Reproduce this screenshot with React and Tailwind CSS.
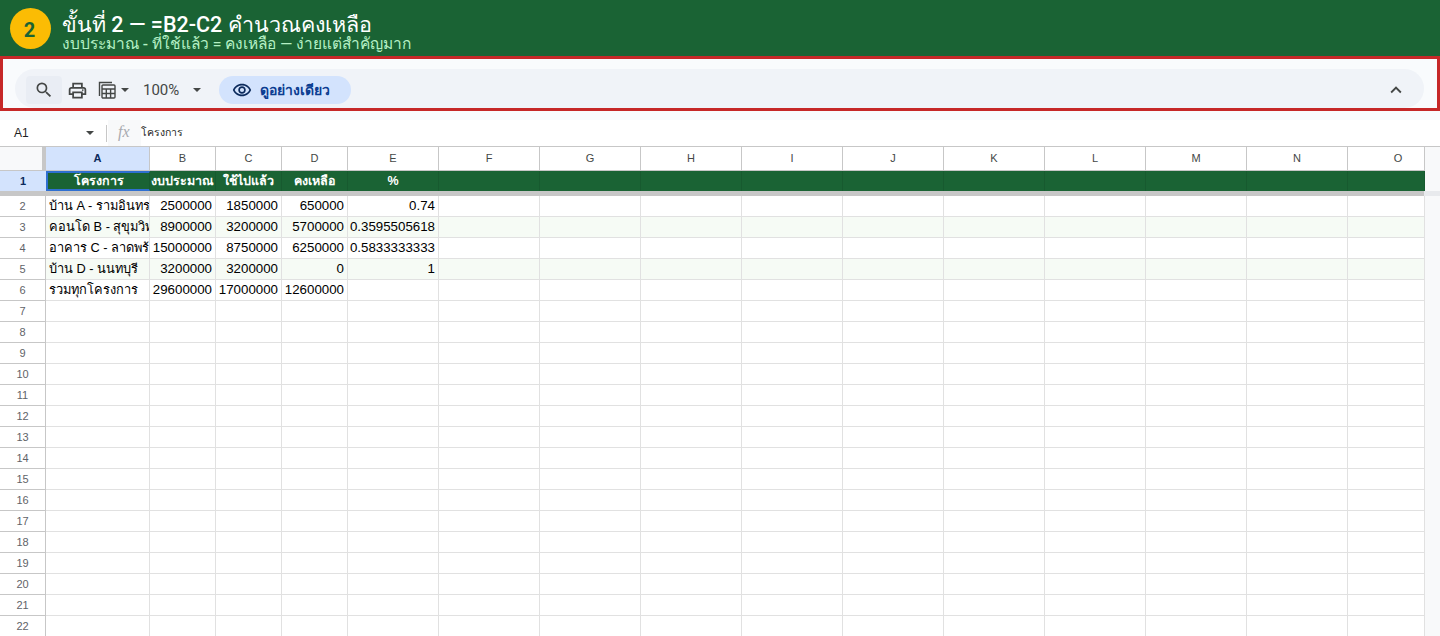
import { MdSearch, MdOutlineLocalPrintshop, MdOutlineRemoveRedEye, MdKeyboardArrowUp } from 'react-icons/md';

const cols = ['A', 'B', 'C', 'D', 'E', 'F', 'G', 'H', 'I', 'J', 'K', 'L', 'M', 'N', 'O'];

const data = [
    ['บ้าน A - รามอินทรา', '2500000', '1850000', '650000', '0.74'],
    ['คอนโด B - สุขุมวิท', '8900000', '3200000', '5700000', '0.3595505618'],
    ['อาคาร C - ลาดพร้าว', '15000000', '8750000', '6250000', '0.5833333333'],
    ['บ้าน D - นนทบุรี', '3200000', '3200000', '0', '1'],
    ['รวมทุกโครงการ', '29600000', '17000000', '12600000', ''],
];

const headers = ['โครงการ', 'งบประมาณ', 'ใช้ไปแล้ว', 'คงเหลือ', '%'];

const gridCols = 'grid grid-cols-[46px_104px_66px_66px_66px_91px_101px_101px_101px_101px_101px_101px_101px_101px_101px_77px_16px]';

function Caret() {
    return <span className="block w-0 h-0 border-x-[4px] border-x-transparent border-t-[4px] border-t-[#444746]" />;
}

function CalcIcon() {
    return (
        <svg width="18" height="18" viewBox="0 0 18 18" fill="none" stroke="#444746" strokeWidth="1.4">
            <path d="M1.5 15V1.5H14" />
            <rect x="4" y="4" width="13" height="13" rx="1" />
            <path d="M4 8h13M8.3 8v9M12.6 8v9M4 12.5h13" />
        </svg>
    );
}

function Toolbar() {
    return (
        <div className="h-[55px] border-[3px] border-[#c62828] bg-[#f9fbfd] flex items-end pl-[12px] pr-[13px]">
            <div className="flex-1 h-[39px] rounded-full bg-[#f0f3f8] flex items-center pt-[3px]">
                <div className="ml-[11px] w-[36px] h-[28px] rounded bg-[#e9edf4] flex items-center justify-center">
                    <MdSearch size={20} color="#444746" />
                </div>
                <MdOutlineLocalPrintshop size={21} color="#444746" className="ml-[5px]" />
                <div className="ml-[10px] flex items-center gap-[5px]">
                    <CalcIcon />
                    <Caret />
                </div>
                <span className="ml-[14px] text-[15px] text-[#444746] w-[42px] font-['Roboto',sans-serif]">100%</span>
                <span className="ml-[8px]"><Caret /></span>
                <div className="ml-[18px] h-[28px] w-[132px] rounded-full bg-[#d3e3fd] flex items-center pl-[13px] gap-[8px] text-[#0b3d91]">
                    <MdOutlineRemoveRedEye size={20} color="#0b2a5c" />
                    <span className="text-[14px] font-bold">ดูอย่างเดียว</span>
                </div>
                <MdKeyboardArrowUp size={22} color="#444746" className="ml-auto mr-[17px]" />
            </div>
        </div>
    );
}

function FormulaBar() {
    return (
        <div className="bg-[#f9fbfd] pt-[9px]">
            <div className="h-[27px] bg-white border-b border-[#c7c7c7] flex items-center text-[12px] text-[#1f1f1f]">
                <span className="w-[86px] pl-[14px]">A1</span>
                <Caret />
                <span className="ml-[12px] w-px h-[17px] bg-[#c7c7c7]" />
                <span className="ml-[1px] w-[33px] h-full pl-[10px] bg-[#f8f9fa] text-[16px] italic text-[#a8abb0] font-['Liberation_Serif',serif]">fx</span>
                <span className="text-[10.5px]">โครงการ</span>
            </div>
        </div>
    );
}

function Sheet() {
    const rows = [];
    for (let n = 7; n <= 22; n++) rows.push(n);

    return (
        <div className="font-['Liberation_Sans','Noto_Sans',sans-serif]">
            {/* column letters */}
            <div className={`${gridCols} h-[24px]`}>
                <div className="bg-[#f8f9fa] border-r-[4px] border-r-[#c7c7c7] border-b border-b-[#c7c7c7]" />
                {cols.map((c, i) => (
                    <div
                        key={c}
                        className={`flex items-center justify-center text-[11px] border-r border-r-[#c7c7c7] border-b border-b-[#c7c7c7] ${i === 0 ? 'bg-[#d3e3fd] font-bold text-[#0b2a5c]' : 'bg-white text-[#444746]'} ${c === 'O' ? 'pl-[24px]' : ''}`}
                    >
                        {c}
                    </div>
                ))}
                <div className="bg-[#f8f9fa]" />
            </div>

            {/* frozen header row */}
            <div className={`${gridCols} h-[20px]`}>
                <div className="bg-[#d3e3fd] flex items-center justify-center text-[11px] font-bold text-[#0b2a5c]">1</div>
                {cols.map((c, i) => (
                    <div
                        key={c}
                        className={`bg-[#1a6334] flex items-center justify-center text-[12.5px] font-bold text-white whitespace-nowrap overflow-hidden border-r border-r-[#175a2f] ${i === 0 ? 'border-2 border-[#2f6fd0]' : ''}`}
                    >
                        {headers[i]}
                    </div>
                ))}
                <div className="bg-[#f8f9fa]" />
            </div>
            <div className="h-[5px] flex">
                <div className="flex-1 bg-[#c7c7c7]" />
                <div className="w-[16px] bg-[#e8eaed]" />
            </div>

            {/* data rows */}
            {data.map((row, r) => (
                <div key={r} className={`${gridCols} h-[21px]`}>
                    <div className="bg-white flex items-center justify-center text-[11px] text-[#5f6368] border-r border-r-[#c7c7c7] border-b border-b-[#c7c7c7]">{r + 2}</div>
                    {cols.map((c, i) => (
                        <div
                            key={c}
                            className={`flex items-center text-black whitespace-nowrap overflow-hidden border-r border-b border-[#e1e1e1] ${i === 0 ? 'text-[12.8px] pl-[3px]' : 'text-[13.3px] justify-end pr-[3px]'} ${r % 2 === 1 && r < 4 ? 'bg-[#f6fbf5]' : 'bg-white'}`}
                        >
                            {row[i]}
                        </div>
                    ))}
                    <div className="bg-[#f8f9fa]" />
                </div>
            ))}

            {/* empty rows */}
            {rows.map((n) => (
                <div key={n} className={`${gridCols} h-[21px]`}>
                    <div className="bg-white flex items-center justify-center text-[11px] text-[#5f6368] border-r border-r-[#c7c7c7] border-b border-b-[#c7c7c7]">{n}</div>
                    {cols.map((c) => (
                        <div key={c} className="bg-white border-r border-b border-[#e1e1e1]" />
                    ))}
                    <div className="bg-[#f8f9fa]" />
                </div>
            ))}
        </div>
    );
}

export default function App() {
    return (
        <div className="w-[1440px] h-[636px] overflow-hidden bg-white font-['Liberation_Sans','Noto_Sans',sans-serif]">
            <div className="h-[56px] bg-[#1a6334] flex items-center pl-[10px]">
                <div className="w-[41px] h-[41px] rounded-full bg-[#fbbc04] flex items-center justify-center pt-[3px] pr-[2px] text-[20px] font-bold text-[#1a6334] font-['Roboto',sans-serif]">2</div>
                <div className="ml-[11px] mt-[10px]">
                    <div className="text-[21.5px] leading-[22px] font-medium text-white font-['Roboto',sans-serif]">ขั้นที่ 2 — =B2-C2 คำนวณคงเหลือ</div>
                    <div className="text-[15.5px] leading-[17px] font-medium text-[#b4f0c4] font-['Roboto',sans-serif]">งบประมาณ - ที่ใช้แล้ว = คงเหลือ — ง่ายแต่สำคัญมาก</div>
                </div>
            </div>
            <Toolbar />
            <FormulaBar />
            <Sheet />
        </div>
    );
}
